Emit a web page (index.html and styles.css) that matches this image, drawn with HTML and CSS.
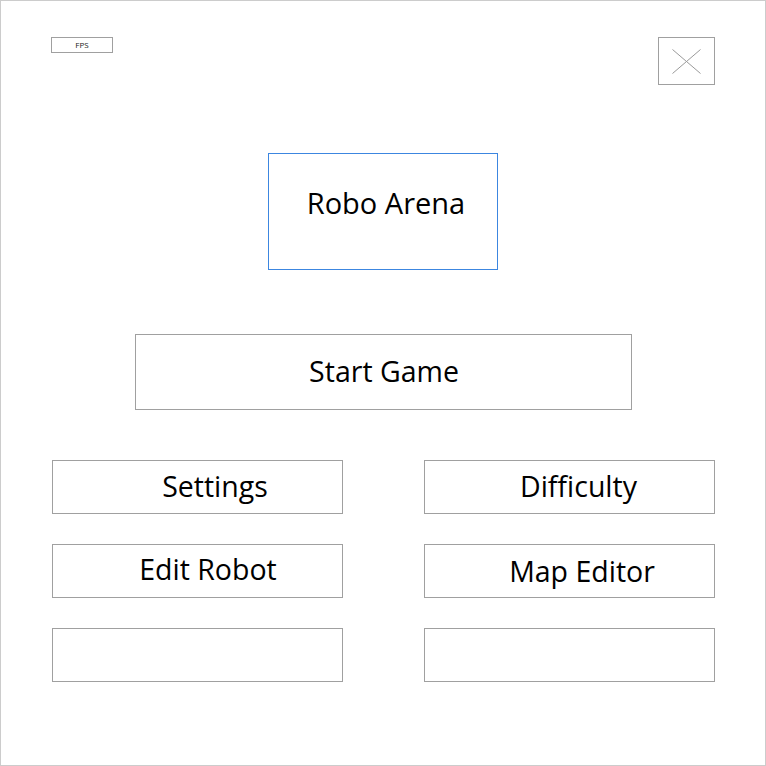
FILE: index.html
```html
<!DOCTYPE html>
<html>
<head>
<meta charset="utf-8">
<link rel="stylesheet" href="styles.css">
</head>
<body>
<div class="window">
  <div class="topbar">
    <div class="fps">FPS</div>
    <button class="close" aria-label="Close">
      <svg width="55" height="46" viewBox="0 0 55 46">
        <line x1="13.5" y1="11.5" x2="41.5" y2="35.5" stroke="#9a9a9a" stroke-width="1"/>
        <line x1="41.5" y1="11.5" x2="13.5" y2="35.5" stroke="#9a9a9a" stroke-width="1"/>
      </svg>
    </button>
  </div>
  <div class="title">Robo Arena</div>
  <button class="btn btn-start">Start Game</button>
  <div class="grid">
    <button class="btn btn-small btn-settings">Settings</button>
    <button class="btn btn-small btn-difficulty">Difficulty</button>
    <button class="btn btn-small btn-edit">Edit Robot</button>
    <button class="btn btn-small btn-map">Map Editor</button>
    <button class="btn btn-small"></button>
    <button class="btn btn-small"></button>
  </div>
</div>
</body>
</html>
```

FILE: styles.css
```css
html, body {
  margin: 0;
  padding: 0;
  background: #ffffff;
}

.window {
  width: 766px;
  height: 766px;
  box-sizing: border-box;
  border: 1px solid #cccccc;
  background: #ffffff;
  display: flex;
  flex-direction: column;
  align-items: center;
  font-family: "Open Sans", "Noto Sans", sans-serif;
  color: #000000;
}

.topbar {
  align-self: stretch;
  display: flex;
  justify-content: space-between;
  align-items: flex-start;
  padding: 36px 50px 0 50px;
}

.fps {
  width: 62px;
  height: 16px;
  box-sizing: border-box;
  border: 1px solid #a0a0a0;
  font-size: 8px;
  line-height: 14px;
  text-align: center;
  color: #222222;
}

.close {
  width: 57px;
  height: 48px;
  box-sizing: border-box;
  border: 1px solid #a0a0a0;
  background: #ffffff;
  padding: 0;
  margin: 0;
  display: block;
}

.close svg {
  display: block;
}

.title {
  margin-top: 68px;
  width: 230px;
  height: 117px;
  box-sizing: border-box;
  border: 1px solid #3c86e0;
  display: flex;
  align-items: center;
  justify-content: center;
  padding: 0 0 18px 6px;
  font-size: 29px;
}

.btn {
  box-sizing: border-box;
  border: 1px solid #a0a0a0;
  background: #ffffff;
  margin: 0;
  padding: 0;
  font-family: "Open Sans", "Noto Sans", sans-serif;
  color: #000000;
  font-size: 28.5px;
  display: flex;
  align-items: center;
  justify-content: center;
}

.btn-start {
  margin-top: 64px;
  width: 497px;
  height: 76px;
  padding-left: 2px;
  padding-bottom: 3px;
}

.grid {
  margin-top: 50px;
  display: grid;
  grid-template-columns: 291px 291px;
  grid-auto-rows: 54px;
  column-gap: 81px;
  row-gap: 30px;
}

.btn-small {
  width: 291px;
  height: 54px;
  padding-bottom: 2px;
}

.btn-settings { padding-left: 36px; }
.btn-difficulty { padding-left: 19px; }
.btn-edit { padding-left: 22px; padding-bottom: 4px; }
.btn-map { padding-left: 26px; padding-bottom: 1px; }
```
